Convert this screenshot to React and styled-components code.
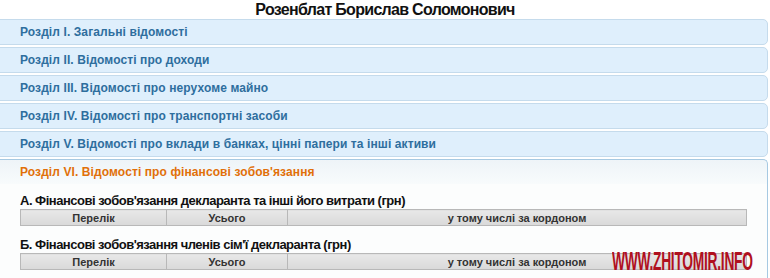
import React from 'react'
import styled, { createGlobalStyle } from 'styled-components'

const sections = [
    'Розділ І. Загальні відомості',
    'Розділ ІІ. Відомості про доходи',
    'Розділ ІІІ. Відомості про нерухоме майно',
    'Розділ IV. Відомості про транспортні засоби',
    'Розділ V. Відомості про вклади в банках, цінні папери та інші активи',
]

const liabilities = [
    'А. Фінансові зобов\'язання декларанта та інші його витрати (грн)',
    'Б. Фінансові зобов\'язання членів сім\'ї декларанта (грн)',
]

const App = () => {
    return (
        <Page>
            <GlobalStyle />
            <Title>Розенблат Борислав Соломонович</Title>
            <Accordion>
                {sections.map((s) => (
                    <Header key={s}>{s}</Header>
                ))}
                <Header $active>Розділ VI. Відомості про фінансові зобов'язання</Header>
                <Content>
                    {liabilities.map((l) => (
                        <Block key={l}>
                            <SubTitle>{l}</SubTitle>
                            <Table>
                                <thead>
                                    <tr>
                                        <Th $w={145}>Перелік</Th>
                                        <Th $w={120}>Усього</Th>
                                        <Th>у тому числі за кордоном</Th>
                                    </tr>
                                </thead>
                            </Table>
                        </Block>
                    ))}
                </Content>
            </Accordion>
            <Watermark>WWW.ZHITOMIR.INFO</Watermark>
        </Page>
    )
}

export default App

const GlobalStyle = createGlobalStyle`
    body {
        margin      : 0;
        background  : #fff;
        font-family : "Liberation Sans", Arial, sans-serif;
        overflow    : hidden;
    }
`

const Page = styled.div`
    position : relative;
    width    : 770px;
    height   : 278px;
    overflow : hidden;
`

const Title = styled.h1`
    margin         : 0;
    height         : 19px;
    line-height    : 19px;
    font-size      : 16px;
    font-weight    : bold;
    letter-spacing : -0.7px;
    text-align     : center;
    color          : #111;
`

const Accordion = styled.div`
    display        : flex;
    flex-direction : column;
    gap            : 2px;
    margin-left    : -5px;
    width          : 773px;
`

const Header = styled.div`
    height         : 24px;
    line-height    : 24px;
    padding-left   : 24px;
    font-size      : 12px;
    font-weight    : bold;
    letter-spacing : 0.1px;
    color          : ${(p) => (p.$active ? '#e17009' : '#2e6e9e')};
    background     : ${(p) => (p.$active ? 'linear-gradient(#eef4f8, #f8fbfc)' : '#dfeffc')};
    border         : 1px solid ${(p) => (p.$active ? '#a6c9e2' : '#c5dbec')};
    border-radius  : ${(p) => (p.$active ? '5px 5px 0 0' : '5px')};
    ${(p) => p.$active && 'border-bottom: none;'}
`

const Content = styled.div`
    margin-top     : -2px;
    padding        : 10px 22px 10px 24px;
    display        : flex;
    flex-direction : column;
    gap            : 12px;
    background     : #fcfdfd;
    border         : 1px solid #a6c9e2;
    border-top     : none;
    height         : 120px;
`

const Block = styled.div`
    display        : flex;
    flex-direction : column;
    gap            : 1px;
`

const SubTitle = styled.h3`
    margin         : 0;
    font-size      : 13px;
    line-height    : 14px;
    font-weight    : bold;
    letter-spacing : -0.5px;
    color          : #111;
`

const Table = styled.table`
    width           : 727px;
    border-collapse : collapse;
`

const Th = styled.th`
    width       : ${(p) => (p.$w ? `${p.$w}px` : 'auto')};
    height      : 15px;
    padding     : 0;
    font-size   : 11px;
    font-weight : bold;
    color       : #333;
    text-align  : center;
    background  : linear-gradient(#e8e8e8, #d9d9d9);
    border      : 1px solid #b8b8b8;
`

const Watermark = styled.div`
    position         : absolute;
    left             : 612px;
    top              : 246px;
    font-size        : 26px;
    line-height      : 30px;
    font-weight      : bold;
    color            : #b0101e;
    letter-spacing   : -0.5px;
    transform        : scaleX(0.53);
    transform-origin : left top;
    white-space      : nowrap;
`
